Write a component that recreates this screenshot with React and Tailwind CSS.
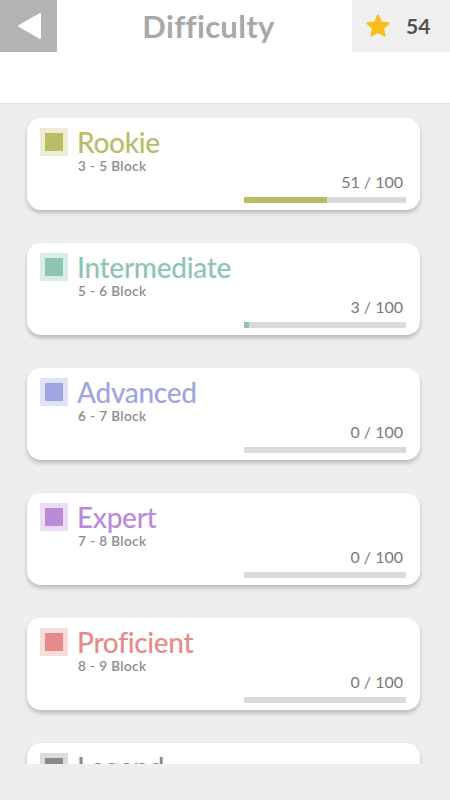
import React from "react";

const levels = [
  { name: "Rookie", blocks: "3 - 5 Block", done: 51, color: "#b9bd66", light: "#ecedd2" },
  { name: "Intermediate", blocks: "5 - 6 Block", done: 3, color: "#8ec4b4", light: "#d9ede7" },
  { name: "Advanced", blocks: "6 - 7 Block", done: 0, color: "#9ea5e0", light: "#e0e3f6" },
  { name: "Expert", blocks: "7 - 8 Block", done: 0, color: "#b98bd9", light: "#ecdcf5" },
  { name: "Proficient", blocks: "8 - 9 Block", done: 0, color: "#e58b8b", light: "#f8dcdc" },
  { name: "Legend", blocks: "9 - 10 Block", done: 0, color: "#8a8a8a", light: "#dcdcdc" },
];

const LevelCard = ({ level }) => (
  <div className="shrink-0 h-[92px] bg-white rounded-[14px] shadow-[0_3px_4px_rgba(0,0,0,0.22)] pl-[13px] pr-[14px] pt-[8px] flex flex-col">
    <div className="flex items-center h-[31px]">
      <div
        className="w-[28px] h-[28px] flex items-center justify-center"
        style={{ backgroundColor: level.light }}
      >
        <div className="w-[18px] h-[18px]" style={{ backgroundColor: level.color }} />
      </div>
      <span
        className="ml-[9px] text-[28px] leading-none font-medium tracking-[-0.3px]"
        style={{ color: level.color }}
      >
        {level.name}
      </span>
    </div>
    <div className="ml-[38px] mt-[1px] text-[13.5px] leading-[16px] font-semibold tracking-[0.4px] text-[#8c8c8c]">
      {level.blocks}
    </div>
    <div className="self-end w-[162px] flex flex-col items-end">
      <span className="text-[16px] leading-[18px] text-[#7a7a7a] mr-[3px] mt-[-1px]">
        {level.done} / 100
      </span>
      <div className="w-full h-[6px] bg-[#dadada] mt-[6px]">
        <div
          className="h-full"
          style={{ width: `${level.done}%`, backgroundColor: level.color }}
        />
      </div>
    </div>
  </div>
);

export default function App() {
  return (
    <div className="w-[450px] h-[800px] bg-[#eeeeee] flex flex-col overflow-hidden font-['Lato',sans-serif]">
      {/* Header */}
      <div className="bg-white h-[104px] border-b border-[#e3e3e3] shrink-0">
        <div className="flex h-[52px] items-stretch">
          <div className="w-[57px] bg-[#b3b3b3] flex items-center justify-center">
            <svg width="26" height="28" viewBox="0 0 26 28">
              <path d="M24 2 L24 26 L3 14 Z" fill="#ffffff" stroke="#ffffff" strokeWidth="2" strokeLinejoin="round" />
            </svg>
          </div>
          <div className="flex-1 flex items-center justify-center">
            <span className="text-[31px] font-bold text-[#a8a8a8] tracking-[0.3px] ml-[8px]">
              Difficulty
            </span>
          </div>
          <div className="w-[98px] bg-[#f0f0f0] flex items-center pl-[12px]">
            <svg width="28" height="27" viewBox="0 0 24 24">
              <path
                d="M12 2.2 L14.9 8.3 L21.5 9.1 L16.6 13.6 L17.9 20.2 L12 16.9 L6.1 20.2 L7.4 13.6 L2.5 9.1 L9.1 8.3 Z"
                fill="#fbbd1e"
                stroke="#fbbd1e"
                strokeWidth="1.6"
                strokeLinejoin="round"
              />
            </svg>
            <span className="ml-[14px] text-[21px] font-bold text-[#505050]">54</span>
          </div>
        </div>
      </div>

      {/* List */}
      <div className="h-[660px] overflow-hidden pl-[27px] pr-[30px] pt-[14px] flex flex-col gap-[33px] w-[450px]">
        {levels.map((level) => (
          <LevelCard key={level.name} level={level} />
        ))}
      </div>
    </div>
  );
}
